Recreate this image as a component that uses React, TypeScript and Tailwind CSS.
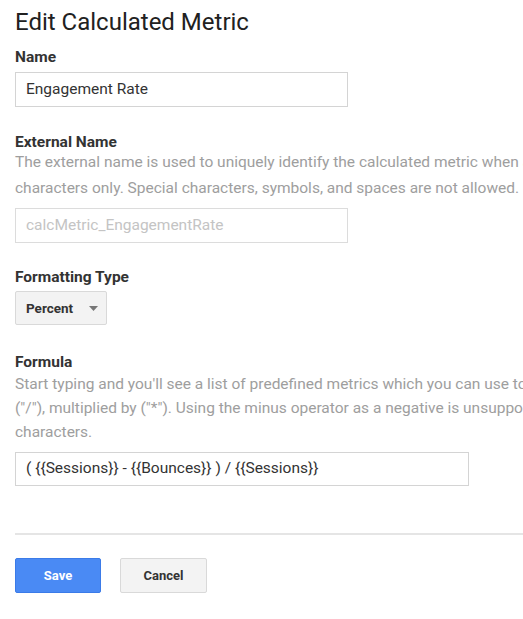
import React from "react";

export default function App() {
  const font = { fontFamily: "Roboto, 'Noto Sans', Arial, sans-serif" };
  return (
    <div style={font} className="w-[523px] h-[619px] overflow-hidden bg-white pl-[15px] text-[#333]">
      <h1 className="mt-[8px] text-[24px] leading-[28px] text-[#212121] font-normal whitespace-nowrap">
        Edit Calculated Metric
      </h1>

      <div className="mt-[11px] text-[15.5px] leading-[20px] font-bold text-[#333]">Name</div>
      <div className="mt-[5px] w-[333px] h-[35px] border border-[#d4d4d4] flex items-center px-[10px] text-[15.5px] text-[#333]">
        Engagement Rate
      </div>

      <div className="mt-[25px] text-[15.5px] leading-[20px] font-bold text-[#333]">External Name</div>
      <div className="mt-[-3px] text-[15.5px] leading-[26px] text-[#9e9e9e] whitespace-nowrap">
        <div>The external name is used to uniquely identify the calculated metric when accessing it from the API. Use alphanumeric</div>
        <div>characters only. Special characters, symbols, and spaces are not allowed.</div>
      </div>
      <div className="mt-[7px] w-[333px] h-[35px] border border-[#dcdcdc] flex items-center px-[10px] text-[15.5px] text-[#c4c4c4]">
        calcMetric_EngagementRate
      </div>

      <div className="mt-[24px] text-[15.5px] leading-[20px] font-bold text-[#333]">Formatting Type</div>
      <div className="mt-[4px] w-[92px] h-[34px] border border-[#d9d9d9] rounded-[2px] bg-[#f3f3f3] flex items-center pl-[10px] text-[13.5px] font-bold text-[#333]">
        <span>Percent</span>
        <svg className="ml-[16px]" width="9" height="5" viewBox="0 0 9 5">
          <path d="M0 0 L9 0 L4.5 5 Z" fill="#777" />
        </svg>
      </div>

      <div className="mt-[27px] text-[15.5px] leading-[20px] font-bold text-[#333]">Formula</div>
      <div className="text-[15.5px] leading-[24px] text-[#9e9e9e] whitespace-nowrap">
        <div>Start typing and you'll see a list of predefined metrics which you can use to create your formula. Operators supported: add</div>
        <div>("/"), multiplied by ("*"). Using the minus operator as a negative is unsupported. Numbers can be included, but only alphanumeric</div>
        <div>characters.</div>
      </div>
      <div className="mt-[8px] w-[454px] h-[34px] border border-[#d4d4d4] flex items-center px-[10px] text-[15.5px] text-[#333] whitespace-nowrap">
        {"( {{Sessions}} - {{Bounces}} ) / {{Sessions}}"}
      </div>

      <div className="mt-[47px] h-[2px] bg-[#e5e5e5] w-[600px]" />

      <div className="mt-[23px] flex gap-[19px]">
        <button className="w-[86px] h-[35px] rounded-[2px] border border-[#3b7be8] bg-[#4a8af4] text-white text-[13px] font-bold">
          Save
        </button>
        <button className="w-[87px] h-[35px] rounded-[2px] border border-[#d9d9d9] bg-[#f3f3f3] text-[#333] text-[13px] font-bold">
          Cancel
        </button>
      </div>
    </div>
  );
}
